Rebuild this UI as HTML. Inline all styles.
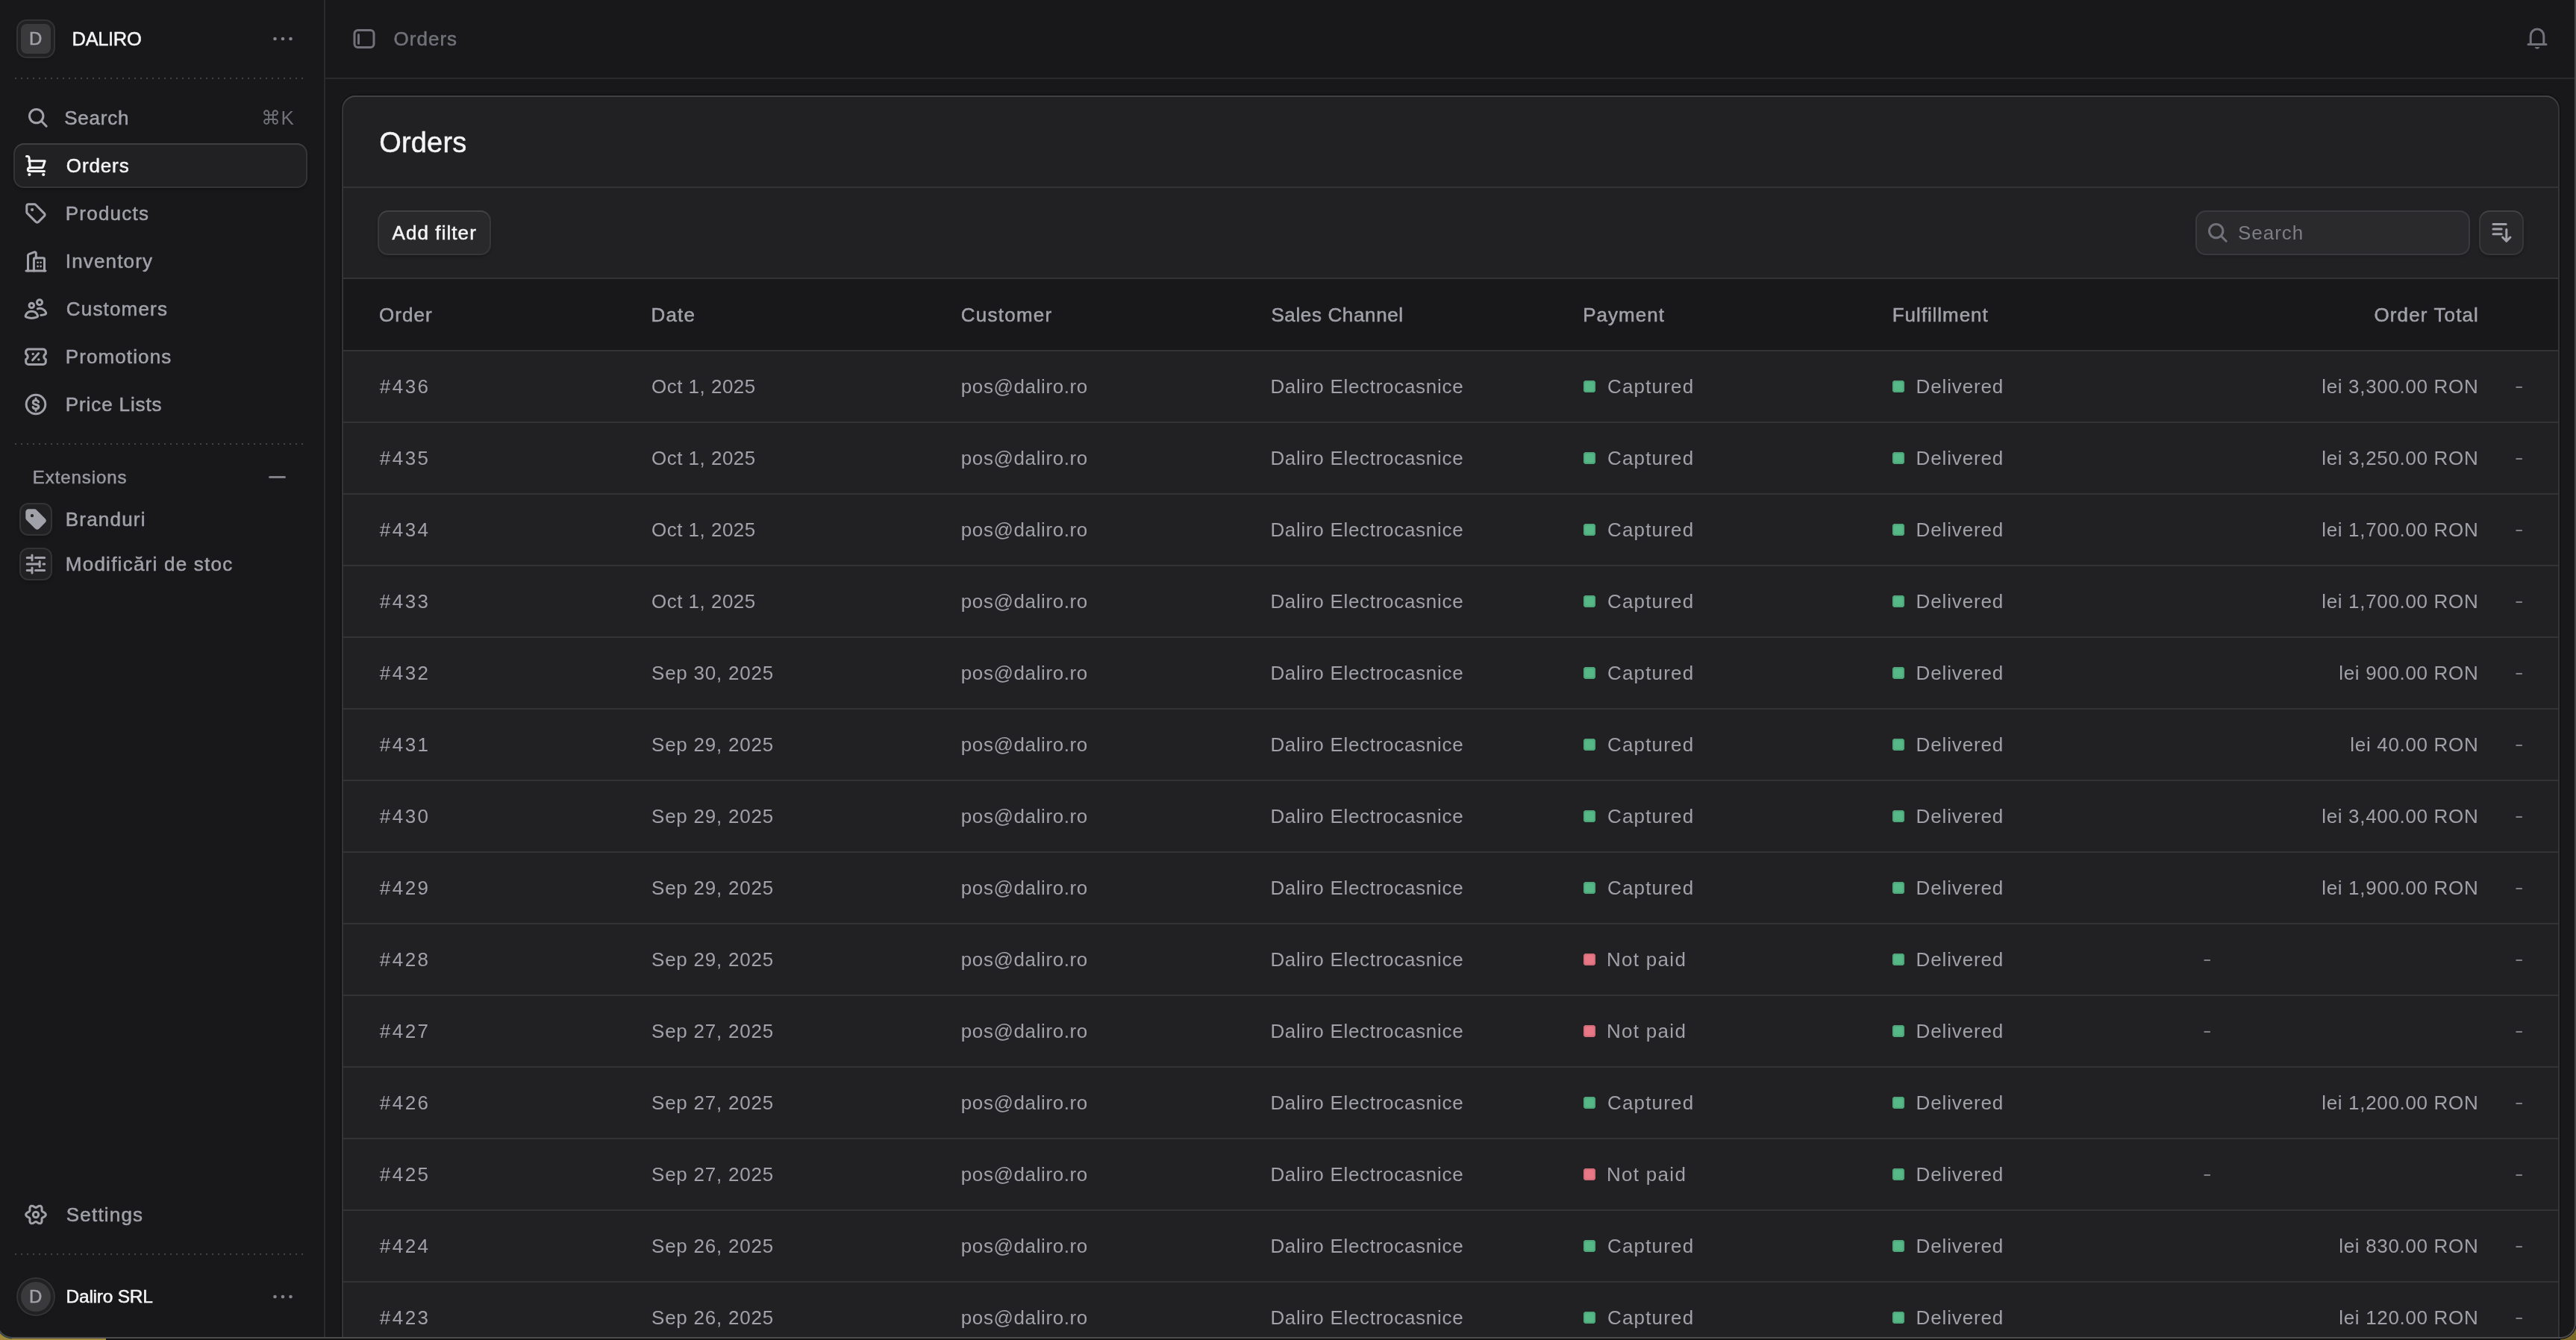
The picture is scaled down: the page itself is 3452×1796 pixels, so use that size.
<!DOCTYPE html>
<html lang="en"><head><meta charset="utf-8"><title>Orders</title><style>
*{margin:0;padding:0;box-sizing:border-box}
html,body{width:3452px;height:1796px;overflow:hidden;background:#18181b}
body{font-family:"Liberation Sans","DejaVu Sans",sans-serif;position:relative}
#app{will-change:transform;position:absolute;left:0;top:0;width:3452px;height:1796px;overflow:hidden;background:#18181b}
.b{position:absolute}
.ic{position:absolute;overflow:visible}
.t{position:absolute;white-space:nowrap;line-height:40px;height:40px;font-size:26px;font-weight:400}
.t.m{-webkit-text-stroke:.5px currentColor}
.t.h1{font-size:38px;-webkit-text-stroke:.45px currentColor}
.t.dash1{transform:scaleX(1.32);transform-origin:0 50%}
.dash{background-image:linear-gradient(90deg,#424246 2px,transparent 2px);background-size:8px 2px;background-repeat:repeat-x}
.btn{background:#29292c;border-radius:12px;box-shadow:0 -2px 0 0 #424245,0 0 0 2px #37373a,0 3px 5px rgba(0,0,0,.4)}
.sq{border-radius:4px}
.sq.g{background:#56b887;box-shadow:inset 0 0 0 2px #4ea67a}
.sq.rd{background:#e87886;box-shadow:inset 0 0 0 2px #d26d79}
</style></head><body><div id="app">
<aside>
<div class="b " style="left:0px;top:0px;width:434px;height:1796px;background:#18181b"></div>
<div class="b " style="left:434px;top:0px;width:2px;height:1796px;background:#2a2a2d"></div>
<div class="b " style="left:24px;top:28px;width:48px;height:48px;background:#212124;border-radius:12px;box-shadow:0 0 0 2px #333336,0 2px 4px rgba(0,0,0,.3)"></div>
<div class="b " style="left:28px;top:32px;width:40px;height:40px;background:#3a3a3d;border-radius:8px"></div>
<span id="avD" class="t m" style="left:39.00px;top:32.00px;letter-spacing:0.000px;color:#a1a1aa;font-size:24px">D</span>
<span id="store" class="t m" style="left:96.60px;top:31.50px;letter-spacing:-0.360px;color:#f4f4f5;font-size:25.5px">DALIRO</span>
<svg class="ic" style="left:364px;top:37px;color:#85858d" width="30" height="30" viewBox="0 0 15 15" ><g fill="currentColor"><circle cx="2.250" cy="7.500" r="1.150"/><circle cx="7.500" cy="7.500" r="1.150"/><circle cx="12.750" cy="7.500" r="1.150"/></g></svg>
<div class="b dash" style="left:20px;top:104px;width:388px;height:2px;"></div>
<div class="b dash" style="left:20px;top:594px;width:388px;height:2px;"></div>
<div class="b dash" style="left:20px;top:1680px;width:388px;height:2px;"></div>
<div class="b " style="left:20px;top:194px;width:390px;height:56px;background:#212124;border-radius:12px;box-shadow:0 -2px 0 0 #3f3f42,0 0 0 2px #343437,0 3px 5px rgba(0,0,0,.4)"></div>
<svg class="ic" style="left:36px;top:142.5px;color:#a1a1aa" width="30" height="30" viewBox="0 0 15 15" ><g fill="none" stroke="currentColor" stroke-width="1.5" stroke-linecap="round" stroke-linejoin="round"><circle cx="6.35" cy="6.3" r="4.6"/><path d="M13.1 13.1 9.7 9.65"/></g></svg>
<span id="nav0" class="t m" style="left:86.20px;top:138.00px;letter-spacing:0.780px;color:#a1a1aa">Search</span>
<svg class="ic" style="left:33px;top:207px;color:#f4f4f5" width="30" height="30" viewBox="0 0 15 15" ><g fill="none" stroke="currentColor" stroke-width="1.5" stroke-linecap="round" stroke-linejoin="round"><path d="M1.25 1.25H2.1a.9.9 0 0 1 .88.72L3.65 8.9"/><path d="M2.85 4.4H13.6L12.3 8.3a.9.9 0 0 1-.85.6H3.65"/><path d="M3.65 8.9c-.9 0-1.5.55-1.5 1.25s.5 1.15 1.2 1.15H13.25"/></g><circle cx="3.2" cy="13.5" r="1.05" fill="currentColor"/><circle cx="12.6" cy="13.5" r="1.05" fill="currentColor"/></svg>
<span id="nav1" class="t m" style="left:88.80px;top:202.00px;letter-spacing:0.880px;color:#f4f4f5">Orders</span>
<svg class="ic" style="left:33px;top:271px;color:#a1a1aa" width="30" height="30" viewBox="0 0 15 15" ><path fill="none" stroke="currentColor" stroke-width="1.5" stroke-linecap="round" stroke-linejoin="round" transform="translate(-.35 -.35)" d="M1.75 2.972v3.944c0 .324.129.635.358.864l5.778 5.778a1.22 1.22 0 0 0 1.728 0l3.944-3.944a1.22 1.22 0 0 0 0-1.728L7.78 2.108a1.22 1.22 0 0 0-.864-.358H2.972c-.675 0-1.222.547-1.222 1.222"/><circle cx="5.05" cy="5.05" r="1.05" fill="currentColor"/></svg>
<span id="nav2" class="t m" style="left:87.80px;top:266.00px;letter-spacing:1.214px;color:#a1a1aa">Products</span>
<svg class="ic" style="left:33px;top:335px;color:#a1a1aa" width="30" height="30" viewBox="0 0 15 15" ><g fill="none" stroke="currentColor" stroke-width="1.5" stroke-linecap="round" stroke-linejoin="round"><path d="M2.25 14V3.7a.9.9 0 0 1 .6-.85L6.5 1.45a.85.85 0 0 1 1.15.8V5.45"/><path d="M6.2 14V6.25a.9.9 0 0 1 .9-.9h5.25a.9.9 0 0 1 .9.9V14"/><path d="M1 14h13"/></g><g fill="currentColor"><circle cx="8.8" cy="8.4" r=".7"/><circle cx="10.8" cy="8.4" r=".7"/><circle cx="8.8" cy="11" r=".7"/><circle cx="10.8" cy="11" r=".7"/></g></svg>
<span id="nav3" class="t m" style="left:87.80px;top:330.00px;letter-spacing:1.162px;color:#a1a1aa">Inventory</span>
<svg class="ic" style="left:33px;top:399px;color:#a1a1aa" width="30" height="30" viewBox="0 0 15 15" ><g fill="none" stroke="currentColor" stroke-width="1.5" stroke-linecap="round" stroke-linejoin="round"><circle cx="4.65" cy="5.2" r="1.6"/><circle cx="10" cy="3.1" r="1.75"/><path d="M8.1 13.1c.5-.2.8-.75.6-1.3a4.3 4.3 0 0 0-8 0c-.2.55.1 1.1.6 1.3 1 .35 2.1.6 3.4.6s2.400-.25 3.400-.6"/><path d="M10.9 11.7c1-.05 1.95-.25 2.75-.55.5-.2.8-.75.6-1.3a4.3 4.3 0 0 0-5.550-2.400"/></g></svg>
<span id="nav4" class="t m" style="left:88.80px;top:394.00px;letter-spacing:1.175px;color:#a1a1aa">Customers</span>
<svg class="ic" style="left:33px;top:463px;color:#a1a1aa" width="30" height="30" viewBox="0 0 15 15" ><path fill="none" stroke="currentColor" stroke-width="1.5" stroke-linecap="round" stroke-linejoin="round" d="M2.6 2.5h9.8a1.75 1.75 0 0 1 1.750 1.750v1.400a2 2 0 0 0 0 3.700v1.650a1.75 1.75 0 0 1-1.750 1.750H2.6A1.75 1.75 0 0 1 .85 11V9.350a2 2 0 0 0 0-3.700V4.250A1.750 1.750 0 0 1 2.6 2.500Z"/><path fill="none" stroke="currentColor" stroke-width="1.5" stroke-linecap="round" stroke-linejoin="round" d="M9.35 5.3 5.3 9.9"/><circle cx="5.6" cy="5.7" r=".85" fill="currentColor"/><circle cx="9.4" cy="9.45" r=".85" fill="currentColor"/></svg>
<span id="nav5" class="t m" style="left:87.80px;top:458.00px;letter-spacing:1.100px;color:#a1a1aa">Promotions</span>
<svg class="ic" style="left:33px;top:527px;color:#a1a1aa" width="30" height="30" viewBox="0 0 15 15" ><g fill="none" stroke="currentColor" stroke-width="1.5" stroke-linecap="round" stroke-linejoin="round"><circle cx="7.5" cy="7.5" r="6.4"/><path d="M9.3 6c-.25-.8-.95-1.250-1.800-1.250-1.100 0-1.850.6-1.850 1.450 0 1.950 3.800.85 3.800 2.850 0 .85-.8 1.450-1.950 1.450-.95 0-1.700-.45-1.950-1.250M7.500 3.500v1.200M7.500 10.400v1.200"/></g></svg>
<span id="nav6" class="t m" style="left:87.80px;top:522.00px;letter-spacing:0.890px;color:#a1a1aa">Price Lists</span>
<span id="kbd" class="t r" style="left:350.00px;top:138.00px;letter-spacing:0.400px;color:#71717a">⌘K</span>
<span id="ext" class="t m" style="left:43.80px;top:619.50px;letter-spacing:0.933px;color:#9898a1;font-size:24px">Extensions</span>
<div class="b " style="left:360px;top:638.2px;width:22.5px;height:3px;background:#7f7f88;border-radius:1.5px"></div>
<div class="b " style="left:28px;top:676px;width:40px;height:40px;background:#212124;border-radius:10px;box-shadow:0 0 0 2px #333336,0 3px 5px rgba(0,0,0,.35)"></div>
<svg class="ic" style="left:33px;top:681px;color:#a1a1aa" width="30" height="30" viewBox="0 0 15 15" ><path fill="currentColor" fill-rule="evenodd" transform="translate(-.35 -.35)" d="M2.972 1C1.883 1 1 1.883 1 2.972v3.944c0 .523.208 1.025.578 1.395l5.778 5.778a1.97 1.97 0 0 0 2.788 0l3.944-3.944a1.97 1.97 0 0 0 0-2.788L8.311 1.578A1.97 1.970 0 0 0 6.916 1zM5.350 6.500a1.050 1.050 0 1 0 0-2.100 1.050 1.050 0 0 0 0 2.100"/></svg>
<span id="extn0" class="t m" style="left:87.80px;top:676.00px;letter-spacing:1.200px;color:#a1a1aa">Branduri</span>
<div class="b " style="left:28px;top:736px;width:40px;height:40px;background:#212124;border-radius:10px;box-shadow:0 0 0 2px #333336,0 3px 5px rgba(0,0,0,.35)"></div>
<svg class="ic" style="left:33px;top:741px;color:#a1a1aa" width="30" height="30" viewBox="0 0 15 15" ><g fill="none" stroke="currentColor" stroke-width="1.5" stroke-linecap="round" stroke-linejoin="round"><path d="M1.600 3.250H5M5 1.500V5M7.250 3.250h6.100"/><path d="M1.600 7.500h8.500M10.100 5.750v3.500M12.500 7.500h.850"/><path d="M1.600 11.750H5M5 10v3.500M7.250 11.750h6.100"/></g></svg>
<span id="extn1" class="t m" style="left:87.80px;top:736.00px;letter-spacing:1.247px;color:#a1a1aa">Modificări de stoc</span>
<svg class="ic" style="left:33px;top:1613px;color:#a1a1aa" width="30" height="30" viewBox="0 0 15 15" ><g fill="none" stroke="currentColor" stroke-width="1.5" stroke-linecap="round" stroke-linejoin="round"><path d="M14.17 7.50 L14.02 8.07 L13.60 8.58 L13.03 8.98 L12.43 9.29 L11.94 9.57 L11.63 9.88 L11.51 10.31 L11.52 10.87 L11.54 11.54 L11.48 12.25 L11.25 12.86 L10.84 13.28 L10.27 13.43 L9.62 13.32 L8.98 13.03 L8.41 12.67 L7.93 12.38 L7.50 12.27 L7.07 12.38 L6.59 12.67 L6.02 13.03 L5.38 13.32 L4.73 13.43 L4.17 13.28 L3.75 12.86 L3.52 12.25 L3.46 11.54 L3.48 10.87 L3.49 10.31 L3.37 9.89 L3.06 9.57 L2.57 9.29 L1.97 8.98 L1.40 8.58 L0.98 8.07 L0.83 7.50 L0.98 6.93 L1.40 6.42 L1.97 6.02 L2.57 5.71 L3.06 5.43 L3.37 5.12 L3.49 4.69 L3.48 4.13 L3.46 3.46 L3.52 2.75 L3.75 2.14 L4.16 1.72 L4.73 1.57 L5.38 1.68 L6.02 1.97 L6.59 2.33 L7.07 2.62 L7.50 2.73 L7.93 2.62 L8.41 2.33 L8.98 1.97 L9.62 1.68 L10.27 1.57 L10.83 1.72 L11.25 2.14 L11.48 2.75 L11.54 3.46 L11.52 4.13 L11.51 4.69 L11.63 5.12 L11.94 5.43 L12.43 5.71 L13.03 6.02 L13.60 6.42 L14.02 6.93 Z"/><circle cx="7.5" cy="7.5" r="1.85"/></g></svg>
<span id="settings" class="t m" style="left:88.80px;top:1608.00px;letter-spacing:1.186px;color:#a1a1aa">Settings</span>
<div class="b " style="left:24px;top:1714px;width:48px;height:48px;background:#212124;border-radius:50%;box-shadow:0 0 0 2px #333336,0 2px 4px rgba(0,0,0,.3)"></div>
<div class="b " style="left:28px;top:1718px;width:40px;height:40px;background:#3a3a3d;border-radius:50%"></div>
<span id="avU" class="t m" style="left:39.00px;top:1718.00px;letter-spacing:0.000px;color:#a1a1aa;font-size:24px">D</span>
<span id="user" class="t m" style="left:88.60px;top:1717.50px;letter-spacing:-0.244px;color:#f4f4f5;font-size:24.5px">Daliro SRL</span>
<svg class="ic" style="left:364px;top:1723px;color:#85858d" width="30" height="30" viewBox="0 0 15 15" ><g fill="currentColor"><circle cx="2.250" cy="7.500" r="1.150"/><circle cx="7.500" cy="7.500" r="1.150"/><circle cx="12.750" cy="7.500" r="1.150"/></g></svg>
</aside>
<header>
<div class="b " style="left:436px;top:104px;width:3016px;height:2px;background:#2a2a2d"></div>
<svg class="ic" style="left:473px;top:37px;color:#71717a" width="30" height="30" viewBox="0 0 15 15" ><g fill="none" stroke="currentColor" stroke-width="1.5" stroke-linecap="round" stroke-linejoin="round"><rect x="1" y="1.750" width="13" height="11.500" rx="2.250"/><path d="M3.750 4.800v5.800"/></g></svg>
<span id="crumb" class="t m" style="left:527.60px;top:31.80px;letter-spacing:1.000px;color:#71717a">Orders</span>
<svg class="ic" style="left:3385px;top:37px;color:#71717a" width="30" height="30" viewBox="0 0 15 15" ><g fill="none" stroke="currentColor" stroke-width="1.5" stroke-linecap="round" stroke-linejoin="round"><path d="M3.100 11.250V5.450a4.400 4.400 0 0 1 8.800 0v5.800"/><path d="M1.500 11.250h12"/></g><path fill="currentColor" d="M5.800 13h3.400a1.750 1.750 0 0 1-3.400 0"/></svg>
</header>
<main>
<div class="b " style="left:460px;top:130px;width:2968px;height:1700px;background:#212124;border-radius:16px;box-shadow:0 -2px 0 0 #424245,0 0 0 2px #353538,0 0 0 3.5px rgba(0,0,0,.28)"></div>
<span id="title" class="t h1" style="left:508.20px;top:170.60px;letter-spacing:0.180px;color:#f4f4f5">Orders</span>
<div class="b " style="left:460px;top:250px;width:2968px;height:2px;background:#333336"></div>
<div class="b btn" style="left:508px;top:284px;width:148px;height:56px;"></div>
<span id="addf" class="t m" style="left:525.60px;top:292.00px;letter-spacing:1.067px;color:#f4f4f5">Add filter</span>
<div class="b " style="left:2944px;top:284px;width:364px;height:56px;background:#2a2a2d;border-radius:12px;box-shadow:0 0 0 2px #3a3a3e,0 2px 4px rgba(0,0,0,.3)"></div>
<svg class="ic" style="left:2957px;top:297px;color:#71717a" width="30" height="30" viewBox="0 0 15 15" ><g fill="none" stroke="currentColor" stroke-width="1.5" stroke-linecap="round" stroke-linejoin="round"><circle cx="6.35" cy="6.3" r="4.6"/><path d="M13.1 13.1 9.7 9.65"/></g></svg>
<span id="ph" class="t r" style="left:2999.00px;top:292.00px;letter-spacing:0.980px;color:#7d7d86">Search</span>
<div class="b btn" style="left:3324px;top:284px;width:56px;height:56px;"></div>
<svg class="ic" style="left:3337px;top:297px;color:#a1a1aa" width="30" height="30" viewBox="0 0 15 15" ><g fill="none" stroke="currentColor" stroke-width="1.5" stroke-linecap="round" stroke-linejoin="round"><path d="M2 1.800h8.600M2 5.050h5.600M2 8.350h5.600M10.900 5.300v7.800M13.500 10.500l-2.600 2.650-2.600-2.650"/></g></svg>
<div class="b " style="left:460px;top:372px;width:2968px;height:2px;background:#333336"></div>
<div class="b " style="left:460px;top:374px;width:2968px;height:95px;background:#18181b"></div>
<span id="th0" class="t m" style="left:508.00px;top:401.80px;letter-spacing:1.050px;color:#a1a1aa">Order</span>
<span id="th1" class="t m" style="left:872.40px;top:401.80px;letter-spacing:1.233px;color:#a1a1aa">Date</span>
<span id="th2" class="t m" style="left:1287.80px;top:401.80px;letter-spacing:1.243px;color:#a1a1aa">Customer</span>
<span id="th3" class="t m" style="left:1703.40px;top:401.80px;letter-spacing:0.633px;color:#a1a1aa">Sales Channel</span>
<span id="th4" class="t m" style="left:2121.20px;top:401.80px;letter-spacing:1.033px;color:#a1a1aa">Payment</span>
<span id="th5" class="t m" style="left:2535.80px;top:401.80px;letter-spacing:0.940px;color:#a1a1aa">Fulfillment</span>
<span id="th6" class="t m" style="right:130.00px;top:401.80px;letter-spacing:1.130px;color:#a1a1aa">Order Total</span>
<div class="b " style="left:460px;top:469px;width:2968px;height:2px;background:#333336"></div>
<span id="r0o" class="t r" style="left:508.80px;top:498.00px;letter-spacing:2.467px;color:#a1a1aa">#436</span>
<span id="r0d" class="t r" style="left:873.00px;top:498.00px;letter-spacing:0.480px;color:#a1a1aa">Oct 1, 2025</span>
<span id="r0c" class="t r" style="left:1287.80px;top:498.00px;letter-spacing:0.600px;color:#a1a1aa">pos@daliro.ro</span>
<span id="r0s" class="t r" style="left:1702.40px;top:498.00px;letter-spacing:0.700px;color:#a1a1aa">Daliro Electrocasnice</span>
<div class="b sq g" style="left:2122px;top:510px;width:16px;height:16px;"></div>
<span id="r0p" class="t r" style="left:2154.00px;top:498.00px;letter-spacing:1.171px;color:#a1a1aa">Captured</span>
<div class="b sq g" style="left:2536px;top:510px;width:16px;height:16px;"></div>
<span id="r0f" class="t r" style="left:2567.60px;top:498.00px;letter-spacing:0.862px;color:#a1a1aa">Delivered</span>
<span id="r0t" class="t r" style="right:130.60px;top:498.00px;letter-spacing:0.673px;color:#a1a1aa">lei 3,300.00 RON</span>
<span id="r0x" class="t r dash1" style="left:3369.70px;top:497.00px;letter-spacing:0.000px;color:#7d7d86">-</span>
<div class="b " style="left:460px;top:565px;width:2968px;height:2px;background:#333336"></div>
<span id="r1o" class="t r" style="left:508.80px;top:594.00px;letter-spacing:2.467px;color:#a1a1aa">#435</span>
<span id="r1d" class="t r" style="left:873.00px;top:594.00px;letter-spacing:0.480px;color:#a1a1aa">Oct 1, 2025</span>
<span id="r1c" class="t r" style="left:1287.80px;top:594.00px;letter-spacing:0.600px;color:#a1a1aa">pos@daliro.ro</span>
<span id="r1s" class="t r" style="left:1702.40px;top:594.00px;letter-spacing:0.700px;color:#a1a1aa">Daliro Electrocasnice</span>
<div class="b sq g" style="left:2122px;top:606px;width:16px;height:16px;"></div>
<span id="r1p" class="t r" style="left:2154.00px;top:594.00px;letter-spacing:1.171px;color:#a1a1aa">Captured</span>
<div class="b sq g" style="left:2536px;top:606px;width:16px;height:16px;"></div>
<span id="r1f" class="t r" style="left:2567.60px;top:594.00px;letter-spacing:0.862px;color:#a1a1aa">Delivered</span>
<span id="r1t" class="t r" style="right:130.60px;top:594.00px;letter-spacing:0.673px;color:#a1a1aa">lei 3,250.00 RON</span>
<span id="r1x" class="t r dash1" style="left:3369.70px;top:593.00px;letter-spacing:0.000px;color:#7d7d86">-</span>
<div class="b " style="left:460px;top:661px;width:2968px;height:2px;background:#333336"></div>
<span id="r2o" class="t r" style="left:508.80px;top:690.00px;letter-spacing:2.467px;color:#a1a1aa">#434</span>
<span id="r2d" class="t r" style="left:873.00px;top:690.00px;letter-spacing:0.480px;color:#a1a1aa">Oct 1, 2025</span>
<span id="r2c" class="t r" style="left:1287.80px;top:690.00px;letter-spacing:0.600px;color:#a1a1aa">pos@daliro.ro</span>
<span id="r2s" class="t r" style="left:1702.40px;top:690.00px;letter-spacing:0.700px;color:#a1a1aa">Daliro Electrocasnice</span>
<div class="b sq g" style="left:2122px;top:702px;width:16px;height:16px;"></div>
<span id="r2p" class="t r" style="left:2154.00px;top:690.00px;letter-spacing:1.171px;color:#a1a1aa">Captured</span>
<div class="b sq g" style="left:2536px;top:702px;width:16px;height:16px;"></div>
<span id="r2f" class="t r" style="left:2567.60px;top:690.00px;letter-spacing:0.862px;color:#a1a1aa">Delivered</span>
<span id="r2t" class="t r" style="right:130.60px;top:690.00px;letter-spacing:0.673px;color:#a1a1aa">lei 1,700.00 RON</span>
<span id="r2x" class="t r dash1" style="left:3369.70px;top:689.00px;letter-spacing:0.000px;color:#7d7d86">-</span>
<div class="b " style="left:460px;top:757px;width:2968px;height:2px;background:#333336"></div>
<span id="r3o" class="t r" style="left:508.80px;top:786.00px;letter-spacing:2.467px;color:#a1a1aa">#433</span>
<span id="r3d" class="t r" style="left:873.00px;top:786.00px;letter-spacing:0.480px;color:#a1a1aa">Oct 1, 2025</span>
<span id="r3c" class="t r" style="left:1287.80px;top:786.00px;letter-spacing:0.600px;color:#a1a1aa">pos@daliro.ro</span>
<span id="r3s" class="t r" style="left:1702.40px;top:786.00px;letter-spacing:0.700px;color:#a1a1aa">Daliro Electrocasnice</span>
<div class="b sq g" style="left:2122px;top:798px;width:16px;height:16px;"></div>
<span id="r3p" class="t r" style="left:2154.00px;top:786.00px;letter-spacing:1.171px;color:#a1a1aa">Captured</span>
<div class="b sq g" style="left:2536px;top:798px;width:16px;height:16px;"></div>
<span id="r3f" class="t r" style="left:2567.60px;top:786.00px;letter-spacing:0.862px;color:#a1a1aa">Delivered</span>
<span id="r3t" class="t r" style="right:130.60px;top:786.00px;letter-spacing:0.673px;color:#a1a1aa">lei 1,700.00 RON</span>
<span id="r3x" class="t r dash1" style="left:3369.70px;top:785.00px;letter-spacing:0.000px;color:#7d7d86">-</span>
<div class="b " style="left:460px;top:853px;width:2968px;height:2px;background:#333336"></div>
<span id="r4o" class="t r" style="left:508.80px;top:882.00px;letter-spacing:2.467px;color:#a1a1aa">#432</span>
<span id="r4d" class="t r" style="left:873.00px;top:882.00px;letter-spacing:0.784px;color:#a1a1aa">Sep 30, 2025</span>
<span id="r4c" class="t r" style="left:1287.80px;top:882.00px;letter-spacing:0.600px;color:#a1a1aa">pos@daliro.ro</span>
<span id="r4s" class="t r" style="left:1702.40px;top:882.00px;letter-spacing:0.700px;color:#a1a1aa">Daliro Electrocasnice</span>
<div class="b sq g" style="left:2122px;top:894px;width:16px;height:16px;"></div>
<span id="r4p" class="t r" style="left:2154.00px;top:882.00px;letter-spacing:1.171px;color:#a1a1aa">Captured</span>
<div class="b sq g" style="left:2536px;top:894px;width:16px;height:16px;"></div>
<span id="r4f" class="t r" style="left:2567.60px;top:882.00px;letter-spacing:0.862px;color:#a1a1aa">Delivered</span>
<span id="r4t" class="t r" style="right:130.60px;top:882.00px;letter-spacing:0.673px;color:#a1a1aa">lei 900.00 RON</span>
<span id="r4x" class="t r dash1" style="left:3369.70px;top:881.00px;letter-spacing:0.000px;color:#7d7d86">-</span>
<div class="b " style="left:460px;top:949px;width:2968px;height:2px;background:#333336"></div>
<span id="r5o" class="t r" style="left:508.80px;top:978.00px;letter-spacing:2.467px;color:#a1a1aa">#431</span>
<span id="r5d" class="t r" style="left:873.00px;top:978.00px;letter-spacing:0.784px;color:#a1a1aa">Sep 29, 2025</span>
<span id="r5c" class="t r" style="left:1287.80px;top:978.00px;letter-spacing:0.600px;color:#a1a1aa">pos@daliro.ro</span>
<span id="r5s" class="t r" style="left:1702.40px;top:978.00px;letter-spacing:0.700px;color:#a1a1aa">Daliro Electrocasnice</span>
<div class="b sq g" style="left:2122px;top:990px;width:16px;height:16px;"></div>
<span id="r5p" class="t r" style="left:2154.00px;top:978.00px;letter-spacing:1.171px;color:#a1a1aa">Captured</span>
<div class="b sq g" style="left:2536px;top:990px;width:16px;height:16px;"></div>
<span id="r5f" class="t r" style="left:2567.60px;top:978.00px;letter-spacing:0.862px;color:#a1a1aa">Delivered</span>
<span id="r5t" class="t r" style="right:130.60px;top:978.00px;letter-spacing:0.673px;color:#a1a1aa">lei 40.00 RON</span>
<span id="r5x" class="t r dash1" style="left:3369.70px;top:977.00px;letter-spacing:0.000px;color:#7d7d86">-</span>
<div class="b " style="left:460px;top:1045px;width:2968px;height:2px;background:#333336"></div>
<span id="r6o" class="t r" style="left:508.80px;top:1074.00px;letter-spacing:2.467px;color:#a1a1aa">#430</span>
<span id="r6d" class="t r" style="left:873.00px;top:1074.00px;letter-spacing:0.784px;color:#a1a1aa">Sep 29, 2025</span>
<span id="r6c" class="t r" style="left:1287.80px;top:1074.00px;letter-spacing:0.600px;color:#a1a1aa">pos@daliro.ro</span>
<span id="r6s" class="t r" style="left:1702.40px;top:1074.00px;letter-spacing:0.700px;color:#a1a1aa">Daliro Electrocasnice</span>
<div class="b sq g" style="left:2122px;top:1086px;width:16px;height:16px;"></div>
<span id="r6p" class="t r" style="left:2154.00px;top:1074.00px;letter-spacing:1.171px;color:#a1a1aa">Captured</span>
<div class="b sq g" style="left:2536px;top:1086px;width:16px;height:16px;"></div>
<span id="r6f" class="t r" style="left:2567.60px;top:1074.00px;letter-spacing:0.862px;color:#a1a1aa">Delivered</span>
<span id="r6t" class="t r" style="right:130.60px;top:1074.00px;letter-spacing:0.673px;color:#a1a1aa">lei 3,400.00 RON</span>
<span id="r6x" class="t r dash1" style="left:3369.70px;top:1073.00px;letter-spacing:0.000px;color:#7d7d86">-</span>
<div class="b " style="left:460px;top:1141px;width:2968px;height:2px;background:#333336"></div>
<span id="r7o" class="t r" style="left:508.80px;top:1170.00px;letter-spacing:2.467px;color:#a1a1aa">#429</span>
<span id="r7d" class="t r" style="left:873.00px;top:1170.00px;letter-spacing:0.784px;color:#a1a1aa">Sep 29, 2025</span>
<span id="r7c" class="t r" style="left:1287.80px;top:1170.00px;letter-spacing:0.600px;color:#a1a1aa">pos@daliro.ro</span>
<span id="r7s" class="t r" style="left:1702.40px;top:1170.00px;letter-spacing:0.700px;color:#a1a1aa">Daliro Electrocasnice</span>
<div class="b sq g" style="left:2122px;top:1182px;width:16px;height:16px;"></div>
<span id="r7p" class="t r" style="left:2154.00px;top:1170.00px;letter-spacing:1.171px;color:#a1a1aa">Captured</span>
<div class="b sq g" style="left:2536px;top:1182px;width:16px;height:16px;"></div>
<span id="r7f" class="t r" style="left:2567.60px;top:1170.00px;letter-spacing:0.862px;color:#a1a1aa">Delivered</span>
<span id="r7t" class="t r" style="right:130.60px;top:1170.00px;letter-spacing:0.673px;color:#a1a1aa">lei 1,900.00 RON</span>
<span id="r7x" class="t r dash1" style="left:3369.70px;top:1169.00px;letter-spacing:0.000px;color:#7d7d86">-</span>
<div class="b " style="left:460px;top:1237px;width:2968px;height:2px;background:#333336"></div>
<span id="r8o" class="t r" style="left:508.80px;top:1266.00px;letter-spacing:2.467px;color:#a1a1aa">#428</span>
<span id="r8d" class="t r" style="left:873.00px;top:1266.00px;letter-spacing:0.784px;color:#a1a1aa">Sep 29, 2025</span>
<span id="r8c" class="t r" style="left:1287.80px;top:1266.00px;letter-spacing:0.600px;color:#a1a1aa">pos@daliro.ro</span>
<span id="r8s" class="t r" style="left:1702.40px;top:1266.00px;letter-spacing:0.700px;color:#a1a1aa">Daliro Electrocasnice</span>
<div class="b sq rd" style="left:2122px;top:1278px;width:16px;height:16px;"></div>
<span id="r8p" class="t r" style="left:2153.00px;top:1266.00px;letter-spacing:1.286px;color:#a1a1aa">Not paid</span>
<div class="b sq g" style="left:2536px;top:1278px;width:16px;height:16px;"></div>
<span id="r8f" class="t r" style="left:2567.60px;top:1266.00px;letter-spacing:0.862px;color:#a1a1aa">Delivered</span>
<span id="r8t" class="t r dash1" style="left:2952.00px;top:1265.00px;letter-spacing:0.000px;color:#7d7d86">-</span>
<span id="r8x" class="t r dash1" style="left:3369.70px;top:1265.00px;letter-spacing:0.000px;color:#7d7d86">-</span>
<div class="b " style="left:460px;top:1333px;width:2968px;height:2px;background:#333336"></div>
<span id="r9o" class="t r" style="left:508.80px;top:1362.00px;letter-spacing:2.467px;color:#a1a1aa">#427</span>
<span id="r9d" class="t r" style="left:873.00px;top:1362.00px;letter-spacing:0.784px;color:#a1a1aa">Sep 27, 2025</span>
<span id="r9c" class="t r" style="left:1287.80px;top:1362.00px;letter-spacing:0.600px;color:#a1a1aa">pos@daliro.ro</span>
<span id="r9s" class="t r" style="left:1702.40px;top:1362.00px;letter-spacing:0.700px;color:#a1a1aa">Daliro Electrocasnice</span>
<div class="b sq rd" style="left:2122px;top:1374px;width:16px;height:16px;"></div>
<span id="r9p" class="t r" style="left:2153.00px;top:1362.00px;letter-spacing:1.286px;color:#a1a1aa">Not paid</span>
<div class="b sq g" style="left:2536px;top:1374px;width:16px;height:16px;"></div>
<span id="r9f" class="t r" style="left:2567.60px;top:1362.00px;letter-spacing:0.862px;color:#a1a1aa">Delivered</span>
<span id="r9t" class="t r dash1" style="left:2952.00px;top:1361.00px;letter-spacing:0.000px;color:#7d7d86">-</span>
<span id="r9x" class="t r dash1" style="left:3369.70px;top:1361.00px;letter-spacing:0.000px;color:#7d7d86">-</span>
<div class="b " style="left:460px;top:1429px;width:2968px;height:2px;background:#333336"></div>
<span id="r10o" class="t r" style="left:508.80px;top:1458.00px;letter-spacing:2.467px;color:#a1a1aa">#426</span>
<span id="r10d" class="t r" style="left:873.00px;top:1458.00px;letter-spacing:0.784px;color:#a1a1aa">Sep 27, 2025</span>
<span id="r10c" class="t r" style="left:1287.80px;top:1458.00px;letter-spacing:0.600px;color:#a1a1aa">pos@daliro.ro</span>
<span id="r10s" class="t r" style="left:1702.40px;top:1458.00px;letter-spacing:0.700px;color:#a1a1aa">Daliro Electrocasnice</span>
<div class="b sq g" style="left:2122px;top:1470px;width:16px;height:16px;"></div>
<span id="r10p" class="t r" style="left:2154.00px;top:1458.00px;letter-spacing:1.171px;color:#a1a1aa">Captured</span>
<div class="b sq g" style="left:2536px;top:1470px;width:16px;height:16px;"></div>
<span id="r10f" class="t r" style="left:2567.60px;top:1458.00px;letter-spacing:0.862px;color:#a1a1aa">Delivered</span>
<span id="r10t" class="t r" style="right:130.60px;top:1458.00px;letter-spacing:0.673px;color:#a1a1aa">lei 1,200.00 RON</span>
<span id="r10x" class="t r dash1" style="left:3369.70px;top:1457.00px;letter-spacing:0.000px;color:#7d7d86">-</span>
<div class="b " style="left:460px;top:1525px;width:2968px;height:2px;background:#333336"></div>
<span id="r11o" class="t r" style="left:508.80px;top:1554.00px;letter-spacing:2.467px;color:#a1a1aa">#425</span>
<span id="r11d" class="t r" style="left:873.00px;top:1554.00px;letter-spacing:0.784px;color:#a1a1aa">Sep 27, 2025</span>
<span id="r11c" class="t r" style="left:1287.80px;top:1554.00px;letter-spacing:0.600px;color:#a1a1aa">pos@daliro.ro</span>
<span id="r11s" class="t r" style="left:1702.40px;top:1554.00px;letter-spacing:0.700px;color:#a1a1aa">Daliro Electrocasnice</span>
<div class="b sq rd" style="left:2122px;top:1566px;width:16px;height:16px;"></div>
<span id="r11p" class="t r" style="left:2153.00px;top:1554.00px;letter-spacing:1.286px;color:#a1a1aa">Not paid</span>
<div class="b sq g" style="left:2536px;top:1566px;width:16px;height:16px;"></div>
<span id="r11f" class="t r" style="left:2567.60px;top:1554.00px;letter-spacing:0.862px;color:#a1a1aa">Delivered</span>
<span id="r11t" class="t r dash1" style="left:2952.00px;top:1553.00px;letter-spacing:0.000px;color:#7d7d86">-</span>
<span id="r11x" class="t r dash1" style="left:3369.70px;top:1553.00px;letter-spacing:0.000px;color:#7d7d86">-</span>
<div class="b " style="left:460px;top:1621px;width:2968px;height:2px;background:#333336"></div>
<span id="r12o" class="t r" style="left:508.80px;top:1650.00px;letter-spacing:2.467px;color:#a1a1aa">#424</span>
<span id="r12d" class="t r" style="left:873.00px;top:1650.00px;letter-spacing:0.784px;color:#a1a1aa">Sep 26, 2025</span>
<span id="r12c" class="t r" style="left:1287.80px;top:1650.00px;letter-spacing:0.600px;color:#a1a1aa">pos@daliro.ro</span>
<span id="r12s" class="t r" style="left:1702.40px;top:1650.00px;letter-spacing:0.700px;color:#a1a1aa">Daliro Electrocasnice</span>
<div class="b sq g" style="left:2122px;top:1662px;width:16px;height:16px;"></div>
<span id="r12p" class="t r" style="left:2154.00px;top:1650.00px;letter-spacing:1.171px;color:#a1a1aa">Captured</span>
<div class="b sq g" style="left:2536px;top:1662px;width:16px;height:16px;"></div>
<span id="r12f" class="t r" style="left:2567.60px;top:1650.00px;letter-spacing:0.862px;color:#a1a1aa">Delivered</span>
<span id="r12t" class="t r" style="right:130.60px;top:1650.00px;letter-spacing:0.673px;color:#a1a1aa">lei 830.00 RON</span>
<span id="r12x" class="t r dash1" style="left:3369.70px;top:1649.00px;letter-spacing:0.000px;color:#7d7d86">-</span>
<div class="b " style="left:460px;top:1717px;width:2968px;height:2px;background:#333336"></div>
<span id="r13o" class="t r" style="left:508.80px;top:1746.00px;letter-spacing:2.467px;color:#a1a1aa">#423</span>
<span id="r13d" class="t r" style="left:873.00px;top:1746.00px;letter-spacing:0.784px;color:#a1a1aa">Sep 26, 2025</span>
<span id="r13c" class="t r" style="left:1287.80px;top:1746.00px;letter-spacing:0.600px;color:#a1a1aa">pos@daliro.ro</span>
<span id="r13s" class="t r" style="left:1702.40px;top:1746.00px;letter-spacing:0.700px;color:#a1a1aa">Daliro Electrocasnice</span>
<div class="b sq g" style="left:2122px;top:1758px;width:16px;height:16px;"></div>
<span id="r13p" class="t r" style="left:2154.00px;top:1746.00px;letter-spacing:1.171px;color:#a1a1aa">Captured</span>
<div class="b sq g" style="left:2536px;top:1758px;width:16px;height:16px;"></div>
<span id="r13f" class="t r" style="left:2567.60px;top:1746.00px;letter-spacing:0.862px;color:#a1a1aa">Delivered</span>
<span id="r13t" class="t r" style="right:130.60px;top:1746.00px;letter-spacing:0.673px;color:#a1a1aa">lei 120.00 RON</span>
<span id="r13x" class="t r dash1" style="left:3369.70px;top:1745.00px;letter-spacing:0.000px;color:#7d7d86">-</span>
</main>
<div class="b " style="left:0px;top:1792px;width:3452px;height:2px;background:linear-gradient(#4c4c4f 0,#4c4c4f 1.5px,#2a2a2c 2px)"></div>
<div class="b " style="left:0px;top:1794px;width:3452px;height:2px;background:#121212"></div>
<div class="b " style="left:0px;top:1794px;width:142px;height:2px;background:#a08a3c"></div>
<div class="b " style="left:3450px;top:0px;width:2px;height:1796px;background:#47474a"></div>
<div class="b " style="left:0px;top:1773px;width:16px;height:23px;background:radial-gradient(circle at 100% 0,#18181b 18.4px,#4b4b4e 19.2px,#4b4b4e 20px,#1f4650 20.8px,#a08a3c 21.8px)"></div>
<div class="b " style="left:3431px;top:1773px;width:21px;height:23px;background:radial-gradient(circle at 0 0,#18181b 18.6px,#48484b 19.4px,#48484b 20.6px,#0c0c0c 21.4px,#7d6b25 22.6px)"></div>
</div></body></html>
